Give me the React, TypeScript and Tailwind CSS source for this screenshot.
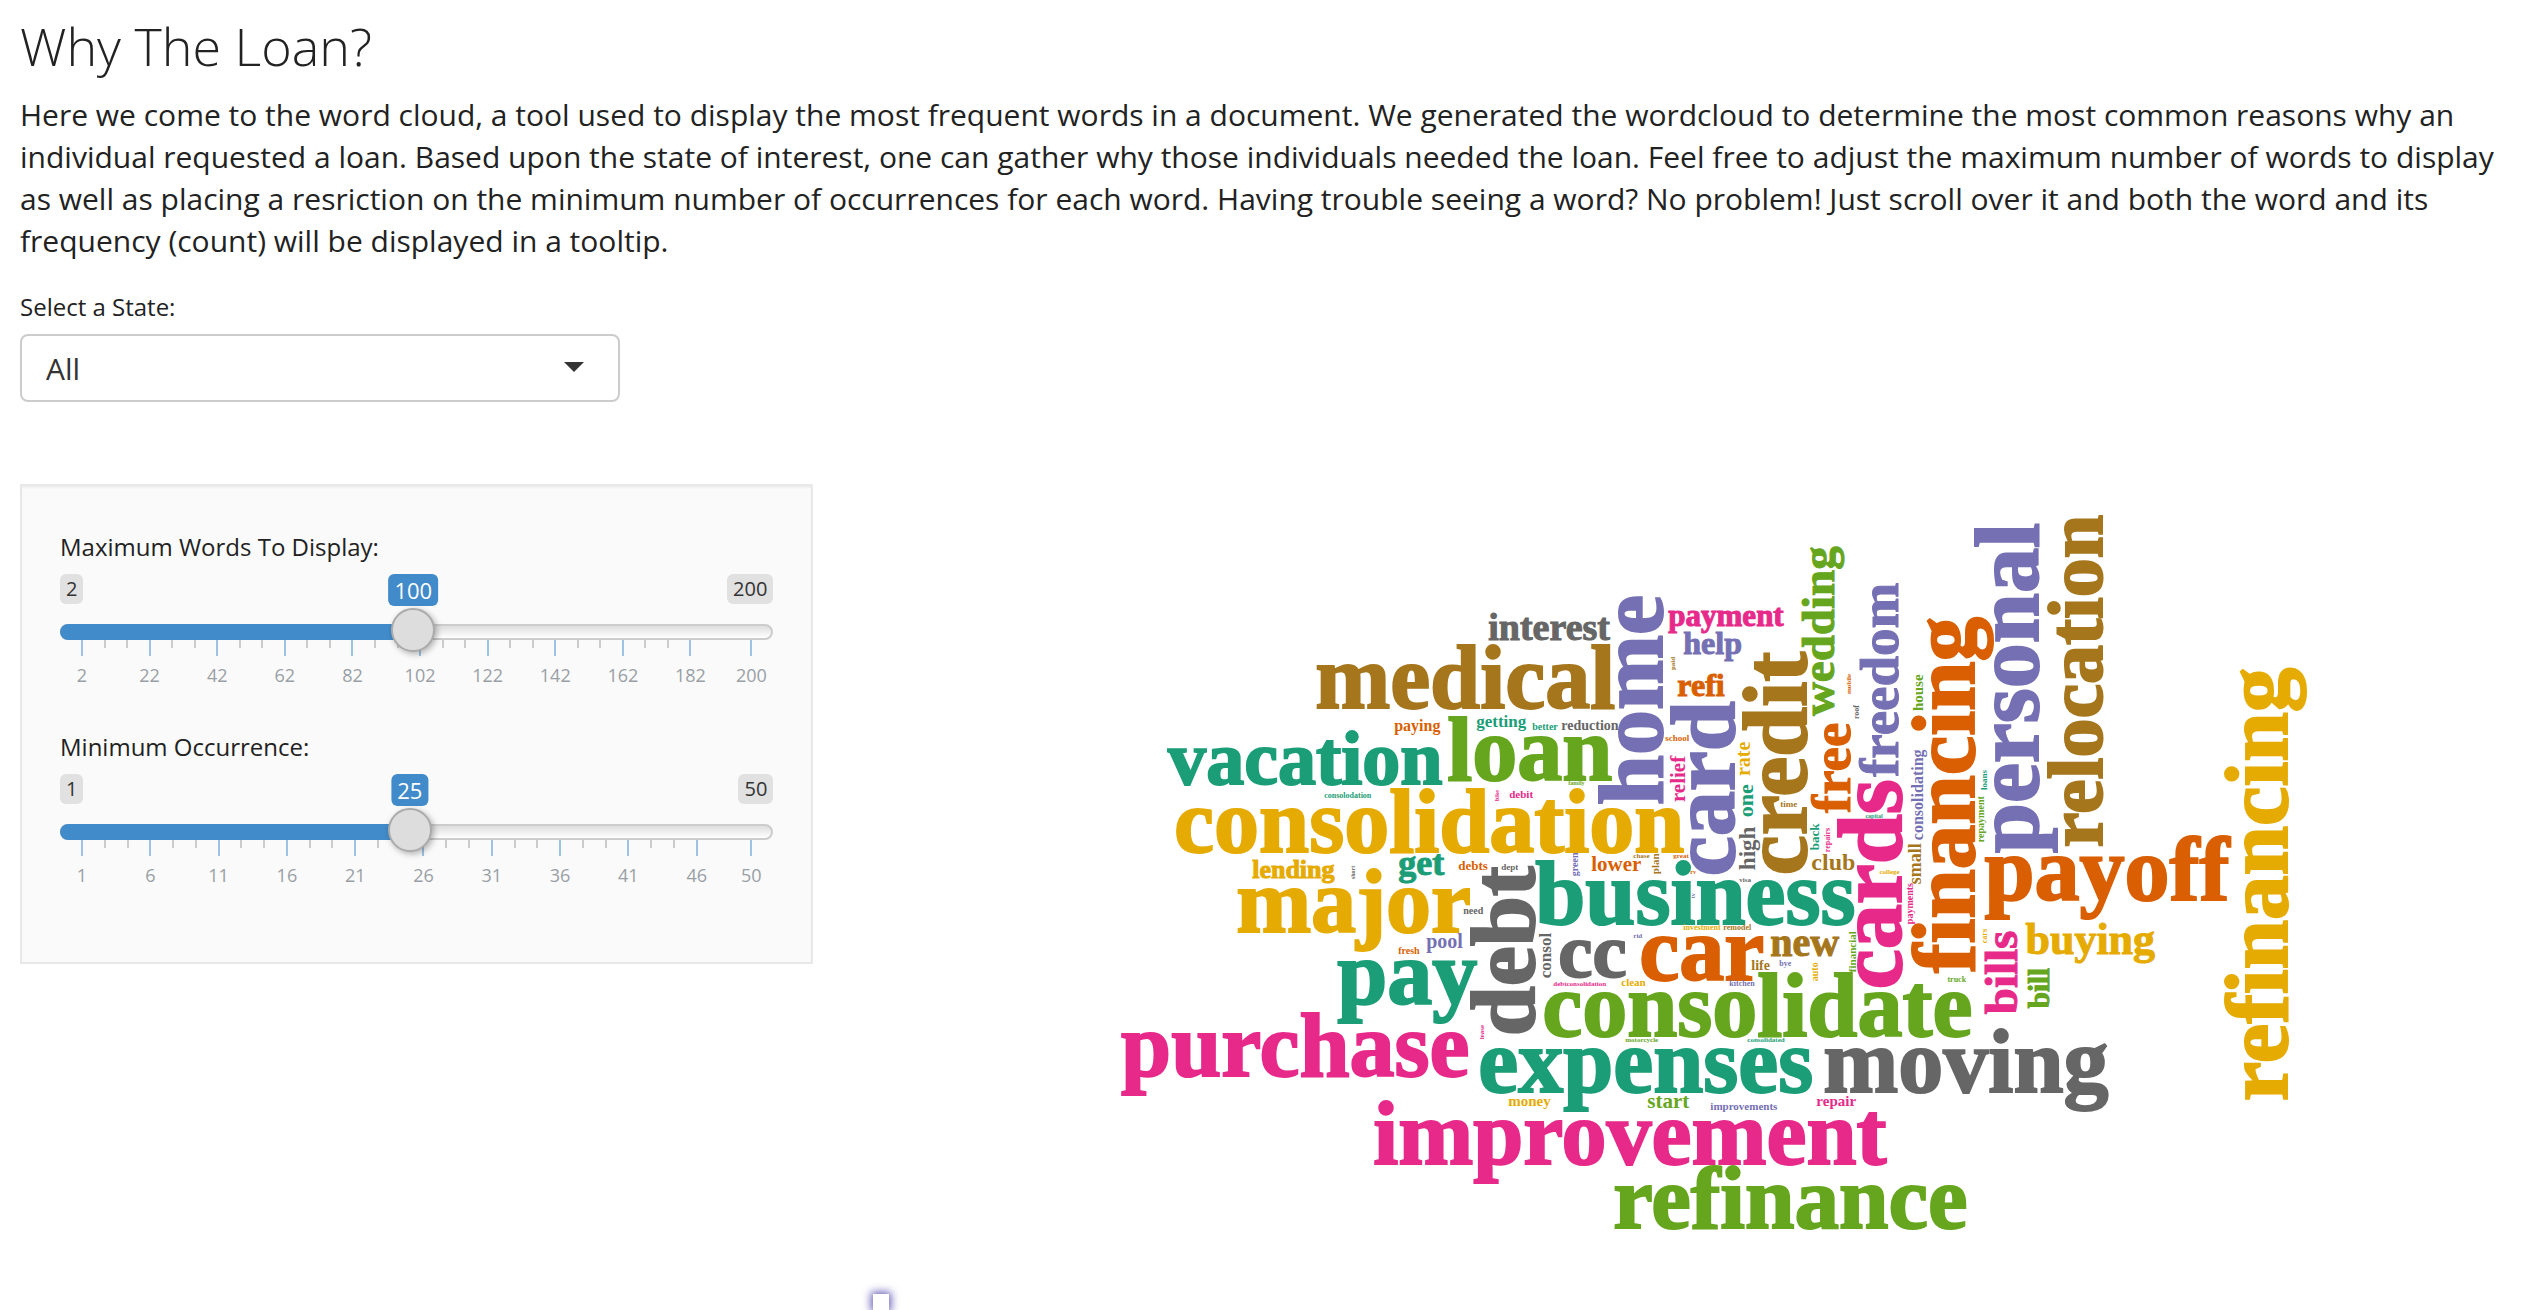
import { useId, useState } from "react";

type Tone = "teal" | "orange" | "purple" | "pink" | "green" | "yellow" | "brown" | "gray";

const tones: Record<Tone, string> = {
  teal: "fill-[#1b9e77] stroke-[#1b9e77]",
  orange: "fill-[#d95f02] stroke-[#d95f02]",
  purple: "fill-[#7570b3] stroke-[#7570b3]",
  pink: "fill-[#e7298a] stroke-[#e7298a]",
  green: "fill-[#66a61e] stroke-[#66a61e]",
  yellow: "fill-[#e6ab02] stroke-[#e6ab02]",
  brown: "fill-[#a6761d] stroke-[#a6761d]",
  gray: "fill-[#666666] stroke-[#666666]",
};

type Word = [text: string, x: number, y: number, size: number, tone: Tone];

// Words read left to right; x and y are the start of the baseline.
const across: Word[] = [
  ["improvement", 1374, 1164, 90, "pink"],
  ["consolidation", 1175, 852, 90, "yellow"],
  ["consolidate", 1543, 1036, 90, "green"],
  ["refinance", 1614, 1228, 89, "green"],
  ["expenses", 1479, 1092, 90, "teal"],
  ["purchase", 1122, 1076, 90, "pink"],
  ["business", 1536, 924, 90, "teal"],
  ["medical", 1316, 708, 90, "brown"],
  ["moving", 1824, 1092, 90, "gray"],
  ["payoff", 1985, 900, 90, "orange"],
  ["major", 1237, 932, 90, "yellow"],
  ["loan", 1448, 780, 90, "green"],
  ["pay", 1338, 1004, 90, "teal"],
  ["car", 1640, 980, 90, "orange"],
  ["vacation", 1169, 784, 76, "teal"],
  ["cc", 1559, 977, 77, "gray"],
  ["buying", 2026, 954, 44, "yellow"],
  ["new", 1771, 956, 40, "brown"],
  ["interest", 1489, 640, 38, "gray"],
  ["get", 1399, 875, 36, "teal"],
  ["refi", 1678, 696, 32, "orange"],
  ["help", 1684, 654, 32, "purple"],
  ["payment", 1669, 626, 31, "pink"],
  ["lending", 1253, 878, 26, "yellow"],
  ["club", 1812, 870, 24, "brown"],
  ["lower", 1592, 871, 21, "orange"],
  ["start", 1648, 1108, 21, "green"],
  ["pool", 1427, 948, 20, "purple"],
  ["getting", 1477, 727, 17, "teal"],
  ["paying", 1395, 731, 16, "orange"],
  ["money", 1509, 1106, 15, "yellow"],
  ["repair", 1817, 1106, 15, "pink"],
  ["reduction", 1562, 730, 14, "gray"],
  ["life", 1752, 970, 14, "brown"],
  ["debts", 1459, 870, 13, "orange"],
  ["improvements", 1711, 1110, 11, "purple"],
  ["debit", 1510, 798, 11, "pink"],
  ["clean", 1622, 986, 11, "yellow"],
  ["better", 1533, 730, 10, "teal"],
  ["need", 1464, 914, 10, "gray"],
  ["fresh", 1399, 954, 10, "orange"],
  ["school", 1666, 741, 9, "orange"],
  ["time", 1781, 807, 9, "brown"],
  ["dept", 1502, 870, 9, "gray"],
  ["consolodation", 1325, 798, 8, "teal"],
  ["truck", 1948, 982, 8, "green"],
  ["investment", 1684, 930, 8, "yellow"],
  ["remodel", 1724, 930, 8, "brown"],
  ["kitchen", 1730, 986, 8, "purple"],
  ["bye", 1780, 966, 8, "purple"],
  ["debtconsolidation", 1554, 986, 7, "pink"],
  ["consolidated", 1748, 1042, 7, "teal"],
  ["motorcycle", 1626, 1042, 7, "green"],
  ["college", 1880, 874, 7, "yellow"],
  ["chase", 1634, 858, 7, "brown"],
  ["great", 1674, 858, 7, "orange"],
  ["visa", 1740, 882, 7, "gray"],
  ["rid", 1634, 938, 7, "purple"],
  ["family", 1569, 785, 6, "green"],
  ["capital", 1866, 818, 6, "teal"],
  ["rv", 1691, 874, 6, "orange"],
];

// Words read bottom to top.
const upward: Word[] = [
  ["refinancing", 2287, 1101, 89, "yellow"],
  ["financing", 1975, 973, 89, "orange"],
  ["personal", 2039, 853, 90, "purple"],
  ["credit", 1807, 875, 90, "brown"],
  ["home", 1663, 805, 90, "purple"],
  ["cards", 1902, 989, 90, "pink"],
  ["card", 1735, 876, 90, "purple"],
  ["debt", 1535, 1036, 90, "gray"],
  ["relocation", 2103, 847, 78, "brown"],
  ["freedom", 1899, 777, 55, "purple"],
  ["free", 1851, 813, 55, "orange"],
  ["wedding", 1835, 716, 47, "green"],
  ["bills", 2018, 1014, 47, "pink"],
  ["bill", 2050, 1008, 29, "green"],
  ["high", 1756, 870, 23, "gray"],
  ["one", 1754, 817, 22, "teal"],
  ["relief", 1686, 802, 21, "pink"],
  ["rate", 1751, 776, 20, "yellow"],
  ["small", 1922, 884, 18, "brown"],
  ["consol", 1552, 978, 17, "gray"],
  ["consolidating", 1924, 840, 16, "purple"],
  ["house", 1924, 711, 15, "green"],
  ["back", 1820, 850, 13, "teal"],
  ["financial", 1857, 972, 11, "green"],
  ["plan", 1660, 874, 11, "brown"],
  ["green", 1579, 876, 10, "purple"],
  ["auto", 1819, 981, 10, "yellow"],
  ["repayment", 1985, 842, 10, "green"],
  ["payments", 1914, 924, 10, "pink"],
  ["loans", 1988, 790, 9, "teal"],
  ["repairs", 1831, 852, 8, "pink"],
  ["roof", 1860, 719, 8, "gray"],
  ["cars", 1988, 943, 8, "yellow"],
  ["mobile", 1852, 694, 7, "orange"],
  ["paid", 1676, 670, 7, "brown"],
  ["lease", 1485, 1039, 7, "pink"],
  ["bike", 1500, 801, 6, "pink"],
  ["short", 1356, 879, 6, "gray"],
  ["tv", 1696, 898, 6, "purple"],
];

// A thin outline thickens the large words; small ones stay crisp without it.
const outline = (size: number) => (size >= 70 ? 2 : size >= 26 ? 1 : 0);

function WordCloud() {
  return (
    <svg
      viewBox="874 484 1636 800"
      role="img"
      aria-label="Word cloud of loan reasons"
      className="block h-auto w-full font-['Liberation_Serif',serif] font-bold"
    >
      {across.map(([text, x, y, size, tone]) => (
        <text key={text} x={x} y={y} fontSize={size} strokeWidth={outline(size)} className={tones[tone]}>
          {text}
        </text>
      ))}
      {upward.map(([text, x, y, size, tone]) => (
        <text
          key={text}
          transform={`translate(${x} ${y}) rotate(-90)`}
          fontSize={size}
          strokeWidth={outline(size)}
          className={tones[tone]}
        >
          {text}
        </text>
      ))}
    </svg>
  );
}

function RangeField({ label, min, max, step, initial }: { label: string; min: number; max: number; step: number; initial: number }) {
  const id = useId();
  const [value, setValue] = useState(initial);
  const place = (v: number) => `${((v - min) / (max - min)) * 100}%`;

  const majors: number[] = [];
  for (let v = min; v < max; v += step) majors.push(v);
  const minors = majors.slice(0, -1).flatMap((v) => [v + step / 3, v + (2 * step) / 3]);
  majors.push(max);

  return (
    <div className="h-[200px]">
      <label htmlFor={id} className="block text-2xl leading-8 text-[#222]">
        {label}
      </label>
      <div className="relative mt-[11px] flex h-[34px] justify-between">
        <span className="h-[30px] rounded-md bg-[#e1e1e1] px-1.5 text-xl leading-[30px] text-[#333]">{min}</span>
        <span className="h-[30px] rounded-md bg-[#e1e1e1] px-1.5 text-xl leading-[30px] text-[#333]">{max}</span>
        <div className="absolute inset-x-[22px] top-0">
          <output
            htmlFor={id}
            className="absolute h-8 -translate-x-1/2 rounded-md bg-[#428bca] px-1.5 text-[22px] leading-8 text-white"
            style={{ left: place(value) }}
          >
            {value}
          </output>
        </div>
      </div>
      <div className="relative h-11">
        <div className="absolute inset-x-0 top-4 h-4 rounded-lg border-2 border-[#ccc] bg-linear-to-b from-[#dedede] to-white" />
        <div className="absolute top-4 left-0 h-4 w-full px-[11px]">
          <div className="-ml-[11px] h-4 rounded-l-lg bg-[#428bca]" style={{ width: place(value) }} />
        </div>
        <div className="absolute inset-x-[22px] top-8">
          {minors.map((v) => (
            <span key={v} className="absolute h-2 w-0.5 -translate-x-1/2 bg-[#ccc]" style={{ left: place(v) }} />
          ))}
          {majors.map((v) => (
            <span key={v} className="absolute h-4 w-0.5 -translate-x-1/2 bg-[#9cc3e4]" style={{ left: place(v) }} />
          ))}
        </div>
        <input
          id={id}
          type="range"
          min={min}
          max={max}
          value={value}
          onChange={(e) => setValue(Number(e.target.value))}
          className="relative block h-11 w-full cursor-pointer appearance-none bg-transparent [&::-webkit-slider-thumb]:size-11 [&::-webkit-slider-thumb]:appearance-none [&::-webkit-slider-thumb]:rounded-full [&::-webkit-slider-thumb]:border-2 [&::-webkit-slider-thumb]:border-[#ababab] [&::-webkit-slider-thumb]:bg-[#ddd] [&::-webkit-slider-thumb]:shadow-[2px_2px_6px_rgba(0,0,0,0.3)]"
        />
      </div>
      <div className="relative mx-[22px] mt-[11px] h-6 text-lg leading-6 text-[#999fa5]">
        {majors.map((v) => (
          <span key={v} className="absolute -translate-x-1/2" style={{ left: place(v) }}>
            {v}
          </span>
        ))}
      </div>
    </div>
  );
}

const states = ["All", "AK", "AL", "AR", "AZ", "CA", "CO", "CT", "FL", "GA", "IL", "MA", "NC", "NJ", "NY", "OH", "PA", "TX", "VA", "WA"];

export default function App() {
  return (
    <main className="bg-white font-['Open_Sans',sans-serif] text-[#222]">
      <header className="px-5 pt-2.5">
        <h2 className="text-[52px] leading-[72px] font-light">Why The Loan?</h2>
        <p className="mt-3 text-3xl leading-[42px]">
          Here we come to the word cloud, a tool used to display the most frequent words in a document. We generated the wordcloud to determine the most
          common reasons why an individual requested a loan. Based upon the state of interest, one can gather why those individuals needed the loan. Feel
          free to adjust the maximum number of words to display as well as placing a resriction on the minimum number of occurrences for each word. Having
          trouble seeing a word? No problem! Just scroll over it and both the word and its frequency (count) will be displayed in a tooltip.
        </p>
      </header>

      <div className="mt-[29px] px-5">
        <label htmlFor="state" className="block text-2xl leading-8">
          Select a State:
        </label>
        <div className="relative mt-[11px] w-[600px] max-w-full">
          <select
            id="state"
            defaultValue="All"
            className="block h-[68px] w-full appearance-none rounded-lg border-2 border-[#ccc] bg-white px-6 text-[30px] text-[#333]"
          >
            {states.map((s) => (
              <option key={s}>{s}</option>
            ))}
          </select>
          <span className="pointer-events-none absolute top-7 right-9 border-x-10 border-t-10 border-x-transparent border-t-[#333]" />
        </div>
      </div>

      <div className="mt-[82px] flex items-start">
        <section className="w-1/3 pr-[30px] pl-5">
          <div className="border-2 border-[#e8e8e8] bg-[#fafafa] px-[38px] pt-[45px] pb-[31px] shadow-[inset_0_2px_2px_rgba(0,0,0,0.05)]">
            <RangeField label="Maximum Words To Display:" min={2} max={200} step={20} initial={100} />
            <RangeField label="Minimum Occurrence:" min={1} max={50} step={5} initial={25} />
          </div>
        </section>
        <section className="w-2/3 pr-5 pl-[30px]">
          <WordCloud />
          <div className="mt-2.5 size-4 bg-white shadow-[0_0_8px_2px_rgba(50,40,160,0.75)]" />
        </section>
      </div>
    </main>
  );
}
